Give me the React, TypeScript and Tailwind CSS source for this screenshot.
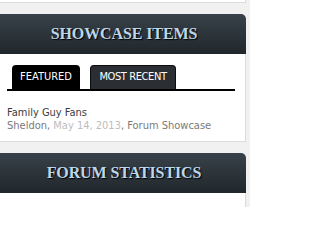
import React from "react";

const headFont = { fontFamily: '"Liberation Serif", "DejaVu Serif", serif' };
const bodyFont = { fontFamily: '"DejaVu Sans Condensed", "DejaVu Sans", sans-serif' };

const Header = ({ title }: { title: string }) => (
  <div className="h-[40px] rounded-tr-[5px] bg-gradient-to-b from-[#39424a] to-[#20272c] flex items-center justify-center pl-[2px]">
    <span
      className="text-[16px] font-bold text-[#bcd6ea] tracking-[-0.1px] [text-shadow:1px_1px_1px_#000]"
      style={headFont}
    >
      {title}
    </span>
  </div>
);

export default function App() {
  return (
    <div className="w-[250px] h-[207px] overflow-hidden bg-[#f1f1f1]" style={bodyFont}>
      <div className="w-[246px]">
        {/* previous block tail */}
        <div className="h-[3px] bg-white border-r border-b border-[#dcdcdc]" />

        <div className="mt-[11px]">
          <Header title="SHOWCASE ITEMS" />
          <div className="h-[88px] bg-white border-r border-b border-[#dcdcdc] pt-[11px]">
            <div className="ml-[7px] w-[228px] border-b-2 border-black flex items-end gap-[10px] pl-[5px]">
              <div className="w-[68px] h-[24px] rounded-t-[4px] bg-black flex items-center justify-center text-[11px] text-white">
                FEATURED
              </div>
              <div className="w-[86px] h-[24px] rounded-t-[4px] bg-[#2b2f33] border border-b-0 border-[#0c0c0c] flex items-center justify-center text-[11px] text-white tracking-[-0.4px]">
                MOST RECENT
              </div>
            </div>
            <div className="pl-[7px] pt-[15px] text-[11px] leading-[13px]">
              <div className="text-[#3c3c3c]">Family Guy Fans</div>
              <div className="text-[#7a7a7a]">
                Sheldon, <span className="text-[#bdbdbd]">May 14, 2013</span>, Forum Showcase
              </div>
            </div>
          </div>
        </div>

        <div className="mt-[11px]">
          <Header title="FORUM STATISTICS" />
          <div className="h-[20px] bg-white border-r border-[#dcdcdc]" />
        </div>
      </div>
    </div>
  );
}
